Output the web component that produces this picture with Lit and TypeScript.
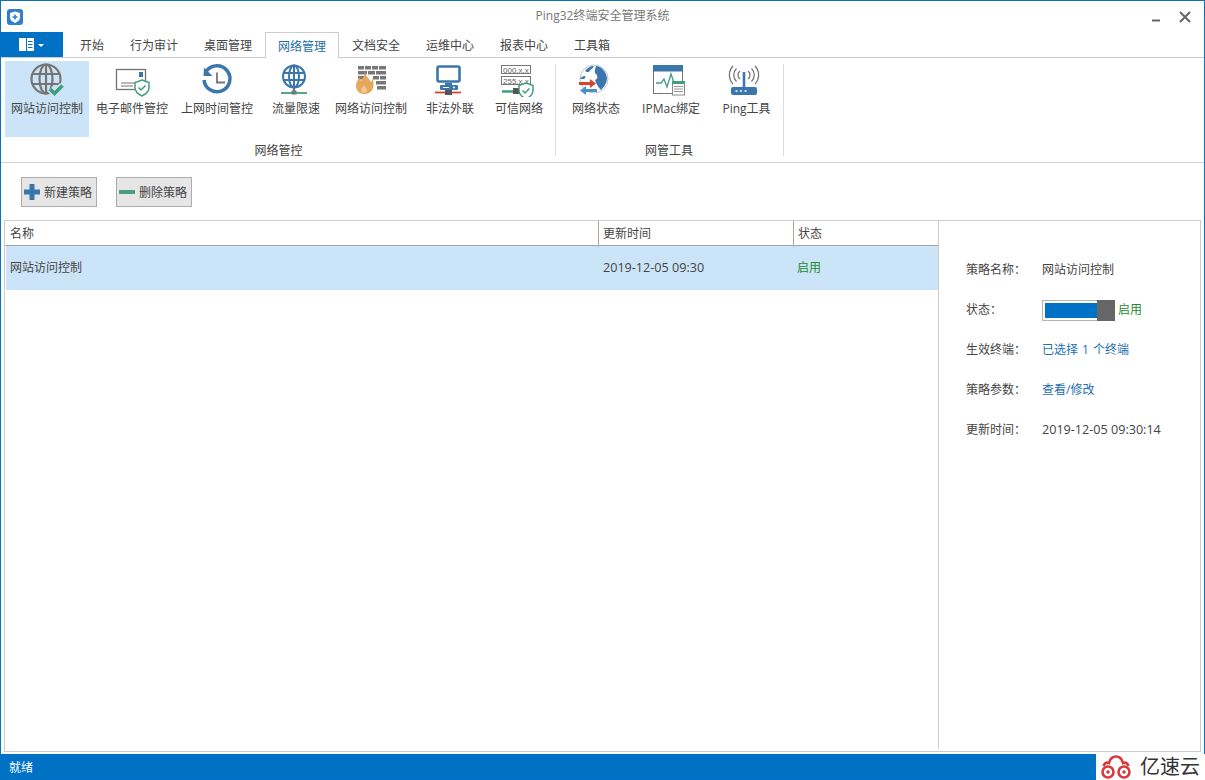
import { LitElement, html, css, svg } from 'lit';
import { customElement, state } from 'lit/decorators.js';

const BLUE = '#3b76ad';
const GREEN = '#3f9f7c';
const GREY = '#757575';

const shield = (x: number, y: number) => svg`
  <path d="M${x + 7} ${y}l7 2.500v5c0 4-3 6.500-7 8.500c-4-2-7-4.500-7-8.500v-5z" fill="#fff" stroke="${GREEN}" stroke-width="1.500"/>
  <path d="M${x + 3.500} ${y + 7.500}l2.500 2.500l4.500-4.500" fill="none" stroke="${GREEN}" stroke-width="1.500"/>`;

const ICONS: Record<string, unknown> = {
  site: svg`
    <g fill="none" stroke="${GREY}" stroke-width="2.200">
      <circle cx="19" cy="16" r="14.500"/><ellipse cx="19" cy="16" rx="6.500" ry="14.500"/>
      <path d="M19 2v28M5.500 11h27M5.500 21h27"/>
    </g>
    <path d="M23 26l4.500 4.500l8-8" fill="none" stroke="#cce4f7" stroke-width="7"/>
    <path d="M23 26l4.500 4.500l8-8" fill="none" stroke="${GREEN}" stroke-width="3.600"/>`,
  mail: svg`
    <rect x="4.500" y="6.500" width="29" height="20" fill="#fff" stroke="${GREY}" stroke-width="1.300"/>
    <rect x="27" y="9" width="4" height="5" fill="${BLUE}"/>
    <path d="M9 20h15M9 23h12" stroke="${GREY}" stroke-width="1"/>
    ${shield(23, 17)}`,
  clock: svg`
    <path d="M9.500 8a13 13 0 1 1-2.500 9" fill="none" stroke="${BLUE}" stroke-width="3.500"/>
    <path d="M7 4.500l8.500 8.500h-9z" fill="${BLUE}"/>
    <path d="M20 9.500v10h8" fill="none" stroke="${GREY}" stroke-width="1.800"/>`,
  speed: svg`
    <g fill="none" stroke="${BLUE}" stroke-width="2">
      <circle cx="18" cy="13.500" r="11"/><ellipse cx="18" cy="13.500" rx="5" ry="11"/>
      <path d="M18 2.500v22M7.500 10h21M7.500 17h21"/>
    </g>
    <path d="M18 24.500v5" stroke="${GREY}" stroke-width="2"/>
    <path d="M5 30h26" stroke="${GREEN}" stroke-width="1.800"/>
    <rect x="15.500" y="27.500" width="5" height="4" fill="${GREY}"/>`,
  firewall: svg`
    <g fill="#777">
      <path d="M7 3h6v3.500h-6zM14 3h6v3.500h-6zM21 3h6v3.500h-6zM28 3h7v3.500h-7z"/>
      <path d="M7 8h9v3.500h-9zM17 8h7v3.500h-7zM25 8h10v3.500h-10z"/>
      <path d="M7 13h6v3.500h-6zM22 13h6v3.500h-6zM29 13h6v3.500h-6z"/>
      <path d="M25 18h10v3.500h-10zM26 23h9v3.500h-9z"/>
    </g>
    <path d="M14 8c0 5 4 7 6 11c1-1 1-2 1-4c2 3 2 7 1 10c-1 4-5 6-9 6s-8-3-8-8c0-4 2-5 3-9c1 1 1 3 2 4c2-3 4-6 4-10z" fill="#e6a95c"/>
    <path d="M13 22c1 2 3 3 3 5c0 2-1.500 3-3 3s-3-1-3-3c0-2 2-3 3-5z" fill="#fff" opacity=".35"/>`,
  illegal: svg`
    <rect x="7.500" y="3.500" width="22" height="15" rx="1.500" fill="none" stroke="${BLUE}" stroke-width="2.600"/>
    <path d="M15 20h7v3h-7z" fill="${BLUE}"/>
    <rect x="10" y="22" width="18" height="5" rx="1" fill="${BLUE}"/>
    <path d="M13 24.500h6" stroke="#fff" stroke-width="1"/><circle cx="24" cy="24.500" r="1" fill="#fff"/>
    <path d="M5 29.500h26" stroke="#d0452f" stroke-width="1.800"/>
    <rect x="15" y="27" width="7" height="5" fill="#555"/>`,
  trust: svg`
    <g fill="#fff" stroke="#777" stroke-width="1">
      <rect x="2.500" y="2.500" width="29" height="8"/><rect x="2.500" y="13.500" width="29" height="8"/>
    </g>
    <g fill="#666" font-family="Liberation Sans, sans-serif" font-size="8">
      <text x="4" y="9.500">000.x.x</text><text x="4" y="20.500">255.x.x</text>
    </g>
    <path d="M3 28.500h14" stroke="${GREEN}" stroke-width="2.500"/>
    <rect x="14" y="25" width="7" height="6" fill="#555"/>
    ${shield(20, 20)}`,
  state: svg`
    <circle cx="18" cy="16" r="14" fill="#fff" stroke="#b9c6d6" stroke-width="1"/>
    <path d="M9 8c2-3 5-5 9-5c-1 2-2 3-4 4c0 2-3 3-5 1z" fill="${BLUE}"/>
    <path d="M20 3c5 0 10 5 11 12c0 5-3 9-6 12c-2-2-5-6-6-10c3-1 3-4 1-6c-2-1-1-5 0-8z" fill="${BLUE}"/>
    <path d="M4 16c1-2 3-3 5-3c1 1 0 3-2 3z" fill="${BLUE}"/>
    <path d="M3 19h11v-3l6 4.500l-6 4.500v-3h-11z" fill="#d3452f"/>
    <path d="M21 26h-11v-3l-6 4.500l6 4.500v-3h11z" fill="#4f8fc9"/>`,
  bind: svg`
    <rect x="2.500" y="2.500" width="29" height="28" fill="#fff" stroke="#777" stroke-width="1"/>
    <rect x="2" y="2" width="30" height="6.500" fill="${BLUE}"/>
    <path d="M5 20h5l3-4l3 8l4-13l3 9h5" fill="none" stroke="${GREEN}" stroke-width="1.300"/>
    <rect x="21.500" y="18.500" width="12" height="13.500" fill="#fff" stroke="#888" stroke-width="1"/>
    <rect x="21" y="18" width="13" height="3" fill="${GREEN}"/>
    <path d="M23 23.500h9M23 26h9M23 28.500h9" stroke="#999" stroke-width="1"/>`,
  ping: svg`
    <rect x="4" y="24" width="26" height="8" rx="2" fill="${BLUE}"/>
    <path d="M8.500 28h2M13 28h2M17.500 28h2" stroke="#fff" stroke-width="1.600"/>
    <path d="M17 9v15" stroke="${BLUE}" stroke-width="2.600"/>
    <g fill="none" stroke="#777" stroke-width="1.300">
      <path d="M13 7a5 5 0 0 0 0 8M21 7a5 5 0 0 1 0 8M9.500 4.500a9 9 0 0 0 0 13M24.500 4.500a9 9 0 0 1 0 13M6 2a13 13 0 0 0 0 18M28 2a13 13 0 0 1 0 18" transform="translate(0 1)"/>
    </g>`,
};

const TABS = ['开始', '行为审计', '桌面管理', '网络管理', '文档安全', '运维中心', '报表中心', '工具箱'];

const CONTROL_ITEMS = [
  { key: 'site', label: '网站访问控制', active: true },
  { key: 'mail', label: '电子邮件管控' },
  { key: 'clock', label: '上网时间管控' },
  { key: 'speed', label: '流量限速' },
  { key: 'firewall', label: '网络访问控制' },
  { key: 'illegal', label: '非法外联' },
  { key: 'trust', label: '可信网络' },
];

const TOOL_ITEMS = [
  { key: 'state', label: '网络状态' },
  { key: 'bind', label: 'IPMac绑定' },
  { key: 'ping', label: 'Ping工具' },
];

@customElement('app-root')
export class AppRoot extends LitElement {
  @state() activeTab = '网络管理';

  static styles = css`
    :host {
      display: flex;
      flex-direction: column;
      height: 780px;
      overflow: hidden;
      background: #fff;
      color: #444;
      font: 12px/16px "Open Sans", "Noto Sans CJK SC", sans-serif;
    }
    .window {
      flex: 1;
      min-height: 0;
      display: flex;
      flex-direction: column;
      border: 1px solid #0f72b5;
      border-bottom: 0;
    }
    .titlebar {
      height: 31px;
      display: flex;
      align-items: center;
      flex: none;
    }
    .logo { margin-left: 6px; }
    .title {
      flex: 1;
      text-align: center;
      color: #777;
      margin: 0;
      padding: 0 0 2px 33px;
      font-size: 12px;
      font-weight: 400;
    }
    .win-btns { display: flex; gap: 15px; margin-right: 12px; align-items: center; }
    .tabs {
      height: 26px;
      flex: none;
      display: flex;
      align-items: flex-end;
      border-bottom: 1px solid #ccc;
      box-sizing: border-box;
    }
    .file {
      width: 63px;
      height: 25px;
      margin-left: -1px;
      margin-right: 4px;
      background: #0072c6;
      display: flex;
      align-items: center;
      justify-content: center;
      align-self: flex-start;
    }
    .tab {
      padding: 0 13px;
      height: 25px;
      line-height: 28px;
      box-sizing: border-box;
      white-space: nowrap;
    }
    .tab.active {
      height: 26px;
      margin-bottom: -1px;
      background: #fff;
      border: 1px solid #ccc;
      border-bottom: 0;
      padding: 0 12px;
      color: #1c6ea4;
    }
    .ribbon {
      height: 105px;
      flex: none;
      display: flex;
      box-sizing: border-box;
      padding: 3px 0 0 4px;
      border-bottom: 1px solid #d4d4d4;
    }
    .group {
      display: flex;
      flex-direction: column;
      height: 95px;
      box-sizing: border-box;
      background: linear-gradient(#ddd, #ddd) right 3px / 1px 92px no-repeat;
    }
    .group.control { width: 551px; }
    .group.tools { width: 228px; padding-left: 4px; }
    .items { display: grid; height: 76px; flex: none; }
    .control .items { grid-template-columns: 84px 86px 84px 74px 76px 82px 56px; }
    .tools .items { grid-template-columns: 72px 78px 73px; }
    .item {
      display: flex;
      flex-direction: column;
      align-items: center;
      white-space: nowrap;
    }
    .item svg { display: block; margin-top: 2px; }
    .item span { margin-top: 4px; }
    .item.active { background: #cce4f7; }
    .group-label { text-align: center; margin-top: 6px; padding-right: 4px; }
    .tools .group-label { padding-right: 6px; }
    .toolbar {
      height: 57px;
      flex: none;
      display: flex;
      gap: 19px;
      box-sizing: border-box;
      padding: 14px 0 0 20px;
    }
    .btn {
      width: 76px;
      height: 30px;
      box-sizing: border-box;
      display: flex;
      align-items: center;
      gap: 3px;
      padding: 2px 0 0 1px;
      background: #e6e6e6;
      border: 1px solid #adadad;
      white-space: nowrap;
    }
    .btn svg { margin-top: -2px; }
    .panel {
      flex: 1;
      min-height: 0;
      display: flex;
      margin: 0 3px 2px 3px;
      border: 1px solid #ccc;
    }
    .list {
      width: 933px;
      flex: none;
      border-right: 1px solid #ccc;
      margin-bottom: 2px;
    }
    .head, .row { display: grid; }
    .head {
      grid-template-columns: 593px 195px 145px;
      height: 25px;
      line-height: 26px;
      box-sizing: border-box;
      border-bottom: 1px solid #a6a6a6;
    }
    .head div { padding-left: 4px; border-left: 1px solid #aaa; }
    .head div:first-child { border-left: 0; padding-left: 5px; }
    .row {
      grid-template-columns: 592px 195px 145px;
      margin-left: 1px;
      height: 44px;
      line-height: 44px;
      background: #cce4f7;
    }
    .row div { padding-left: 4px; }
    .num { font-size: 12.6px; }
    .row .num { padding-left: 5px; }
    .on { color: #1e8a2e; }
    .detail {
      flex: 1;
      padding: 29px 0 0 27px;
      display: grid;
      grid-template-columns: 76px 1fr;
      grid-auto-rows: 40px;
      align-items: center;
      align-content: start;
    }
    .link { color: #1c6fb5; }
    .spaced { word-spacing: 1px; }
    .status-cell { display: flex; align-items: center; gap: 3px; }
    .switch {
      width: 73px;
      height: 21px;
      box-sizing: border-box;
      border: 1px solid #b5b5b5;
      background: #fff;
      padding: 2px;
      position: relative;
    }
    .switch i { display: block; height: 100%; width: 52px; background: #0072c6; }
    .switch b {
      position: absolute;
      right: -1px;
      top: -1px;
      width: 18px;
      height: 21px;
      background: #666;
    }
    .status {
      height: 26px;
      flex: none;
      display: flex;
      justify-content: space-between;
      background: #0072c6;
      color: #fff;
      line-height: 28px;
      padding-left: 9px;
    }
    .brand {
      width: 109px;
      background: #fff;
      display: flex;
      align-items: center;
      gap: 8px;
      padding-left: 4px;
      box-sizing: border-box;
      color: #333;
      font-size: 20px;
      line-height: 24px;
    }
  `;

  renderItems(items: { key: string; label: string; active?: boolean }[]) {
    return items.map(
      (it) => html`
        <div class="item ${it.active ? 'active' : ''}">
          <svg width="40" height="34" viewBox="0 0 40 34">${ICONS[it.key]}</svg>
          <span>${it.label}</span>
        </div>
      `
    );
  }

  render() {
    return html`
      <div class="window">
        <header class="titlebar">
          <svg class="logo" width="16" height="16" viewBox="0 0 16 16">
            <rect width="16" height="16" rx="3" fill="#2f7fd0"/>
            <path d="M8 2.500l5 1.500v4.500c0 2.500-2 4-5 5.500c-3-1.500-5-3-5-5.500v-4.500z" fill="#fff"/>
            <path d="M8 5.500v5M5.500 8h5" stroke="#2f7fd0" stroke-width="1.600"/>
          </svg>
          <h1 class="title">Ping32终端安全管理系统</h1>
          <div class="win-btns">
            <svg width="14" height="14" viewBox="0 0 14 14"><path d="M3 10.500h8" stroke="#666" stroke-width="2"/></svg>
            <svg width="14" height="14" viewBox="0 0 14 14"><path d="M2 2l10 10M12 2l-10 10" stroke="#666" stroke-width="2"/></svg>
          </div>
        </header>
        <nav class="tabs">
          <div class="file">
            <svg width="26" height="14" viewBox="0 0 26 14">
              <rect x="0" y="0" width="15" height="13" fill="#fff"/>
              <path d="M7.500 0v13" stroke="#0072c6"/>
              <path d="M9 3.500h4.500M9 6.500h4.500M9 9.500h4.500" stroke="#0072c6"/>
              <path d="M19 6h6l-3 3z" fill="#fff"/>
            </svg>
          </div>
          ${TABS.map((t) => html`<div class="tab ${t === this.activeTab ? 'active' : ''}">${t}</div>`)}
        </nav>
        <section class="ribbon">
          <div class="group control">
            <div class="items">${this.renderItems(CONTROL_ITEMS)}</div>
            <div class="group-label">网络管控</div>
          </div>
          <div class="group tools">
            <div class="items">${this.renderItems(TOOL_ITEMS)}</div>
            <div class="group-label">网管工具</div>
          </div>
        </section>
        <section class="toolbar">
          <div class="btn">
            <svg width="18" height="18" viewBox="0 0 18 18"><path d="M9 1v16M1 9h16" stroke="${BLUE}" stroke-width="5"/></svg>
            新建策略
          </div>
          <div class="btn">
            <svg width="18" height="18" viewBox="0 0 18 18"><path d="M1 9h16" stroke="#4a9d80" stroke-width="4"/></svg>
            删除策略
          </div>
        </section>
        <section class="panel">
          <div class="list">
            <div class="head"><div>名称</div><div>更新时间</div><div>状态</div></div>
            <div class="row"><div>网站访问控制</div><div class="num">2019-12-05 09:30</div><div class="on">启用</div></div>
          </div>
          <div class="detail">
            <div>策略名称：</div><div>网站访问控制</div>
            <div>状态：</div>
            <div class="status-cell"><div class="switch"><i></i><b></b></div><span class="on">启用</span></div>
            <div>生效终端：</div><div class="link spaced">已选择 1 个终端</div>
            <div>策略参数：</div><div class="link">查看/修改</div>
            <div>更新时间：</div><div class="num">2019-12-05 09:30:14</div>
          </div>
        </section>
      </div>
      <footer class="status">
        <span>就绪</span>
        <div class="brand">
          <svg width="32" height="24" viewBox="0 0 32 24">
            <g fill="none" stroke="#d9373a" stroke-width="2.600">
              <circle cx="8" cy="17" r="5.500"/><circle cx="24" cy="17" r="5.500"/>
              <path d="M3.500 11c1-3 3-4 5.500-3c1-4 3-6.500 7-6.500s6 2.500 7 6.500c2.500-1 4.500 0 5.500 3"/>
            </g>
            <circle cx="8" cy="17" r="1.800" fill="#d9373a"/><circle cx="24" cy="17" r="1.800" fill="#d9373a"/>
          </svg>
          <span>亿速云</span>
        </div>
      </footer>
    `;
  }
}
